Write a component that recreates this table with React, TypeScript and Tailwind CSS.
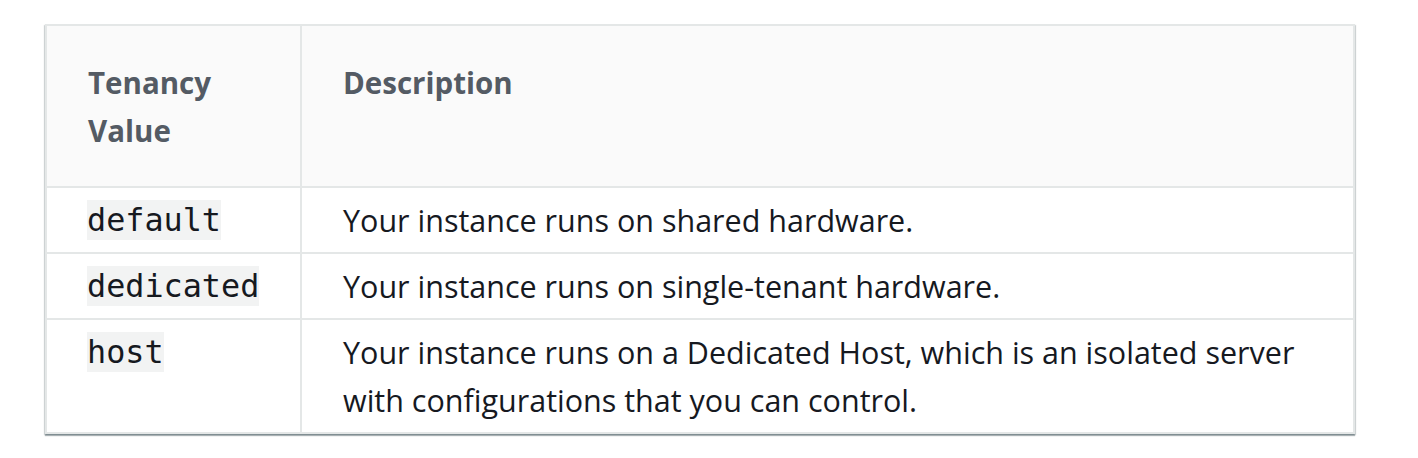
import React from 'react';

interface Row {
  value: string;
  description: string;
}

const rows: Row[] = [
  { value: 'default', description: 'Your instance runs on shared hardware.' },
  { value: 'dedicated', description: 'Your instance runs on single-tenant hardware.' },
  {
    value: 'host',
    description:
      'Your instance runs on a Dedicated Host, which is an isolated server with configurations that you can control.',
  },
];

const App: React.FC = () => {
  return (
    <div className="min-h-screen bg-white pl-[45px] pr-[63px] pt-[24px] font-['Open_Sans',sans-serif]">
      <table className="w-[1310px] border-collapse border-2 border-[#e4e7e7] shadow-[0_2px_1px_0_rgba(0,28,36,0.3),1px_1px_1px_0_rgba(0,28,36,0.15),-1px_1px_1px_0_rgba(0,28,36,0.15)]">
        <thead>
          <tr className="bg-[#fafafa]">
            <th className="w-[255px] border-2 border-[#e4e7e7] px-[41px] pt-[33px] pb-[31px] text-left align-top text-[29.5px] font-bold leading-[48px] text-[#545b64]">
              Tenancy
              <br />
              Value
            </th>
            <th className="border-2 border-[#e4e7e7] px-[41px] pt-[33px] pb-[31px] text-left align-top text-[29.5px] font-bold leading-[48px] text-[#545b64]">
              Description
            </th>
          </tr>
        </thead>
        <tbody>
          {rows.map((r) => (
            <tr key={r.value}>
              <td className="border-2 border-[#e4e7e7] px-[40px] py-[8px] align-top">
                <div className="flex h-[48px] items-center">
                  <code className="inline-block bg-[#f2f3f3] font-['DejaVu_Sans_Mono',monospace] text-[31.8px] leading-[40px] text-[#16191f]">
                    {r.value}
                  </code>
                </div>
              </td>
              <td className="border-2 border-[#e4e7e7] pl-[41px] pr-[40px] py-[8px] align-top text-[30.5px] leading-[48px] text-[#16191f]">
                {r.description}
              </td>
            </tr>
          ))}
        </tbody>
      </table>
    </div>
  );
};

export default App;
